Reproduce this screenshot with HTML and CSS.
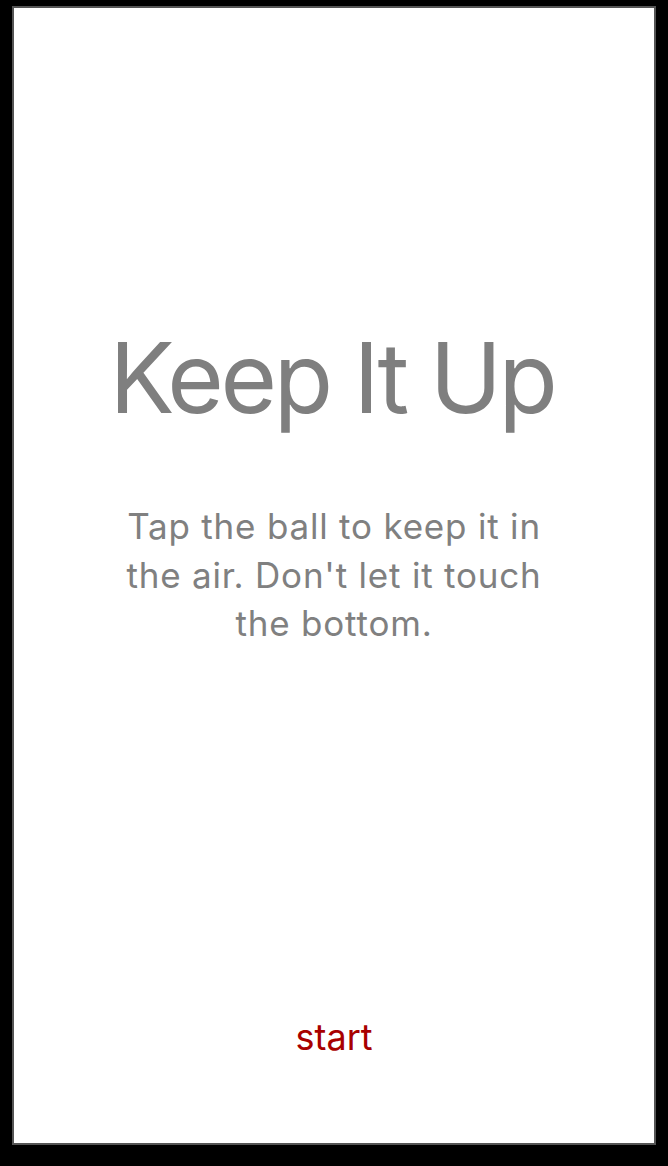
FILE: index.html
```html
<!DOCTYPE html>
<html lang="en">
<head>
<meta charset="utf-8">
<title>Keep It Up</title>
<link rel="stylesheet" href="styles.css">
</head>
<body>
  <main class="screen">
    <h1 class="title">Keep It Up</h1>
    <p class="intro">Tap the ball to keep it in the air. Don't let it touch the bottom.</p>
    <button class="start" type="button">start</button>
  </main>
</body>
</html>
```

FILE: styles.css
```css
html, body {
  margin: 0;
  padding: 0;
  background: #000;
}

body {
  width: 668px;
  height: 1166px;
  padding: 6px 12px 0;
  box-sizing: border-box;
  font-family: Inter, "Liberation Sans", Arial, sans-serif;
}

.screen {
  box-sizing: border-box;
  height: 1139px;
  border: 2px solid #555;
  background: #fff;
  display: flex;
  flex-direction: column;
  align-items: center;
  padding: 321px 0 88px;
}

.title {
  margin: 0 0 0 -4px;
  font-size: 97px;
  line-height: 98px;
  font-weight: 400;
  color: #7f7f7f;
  letter-spacing: -3.4px;
}

.intro {
  margin: 75px 0 0;
  width: 460px;
  text-align: center;
  font-size: 35px;
  line-height: 48.5px;
  color: #808080;
  letter-spacing: 0.8px;
}

.start {
  margin-top: auto;
  border: 0;
  background: none;
  padding: 0;
  font-family: inherit;
  font-size: 36px;
  line-height: 36px;
  color: #a80000;
  cursor: pointer;
}
```
